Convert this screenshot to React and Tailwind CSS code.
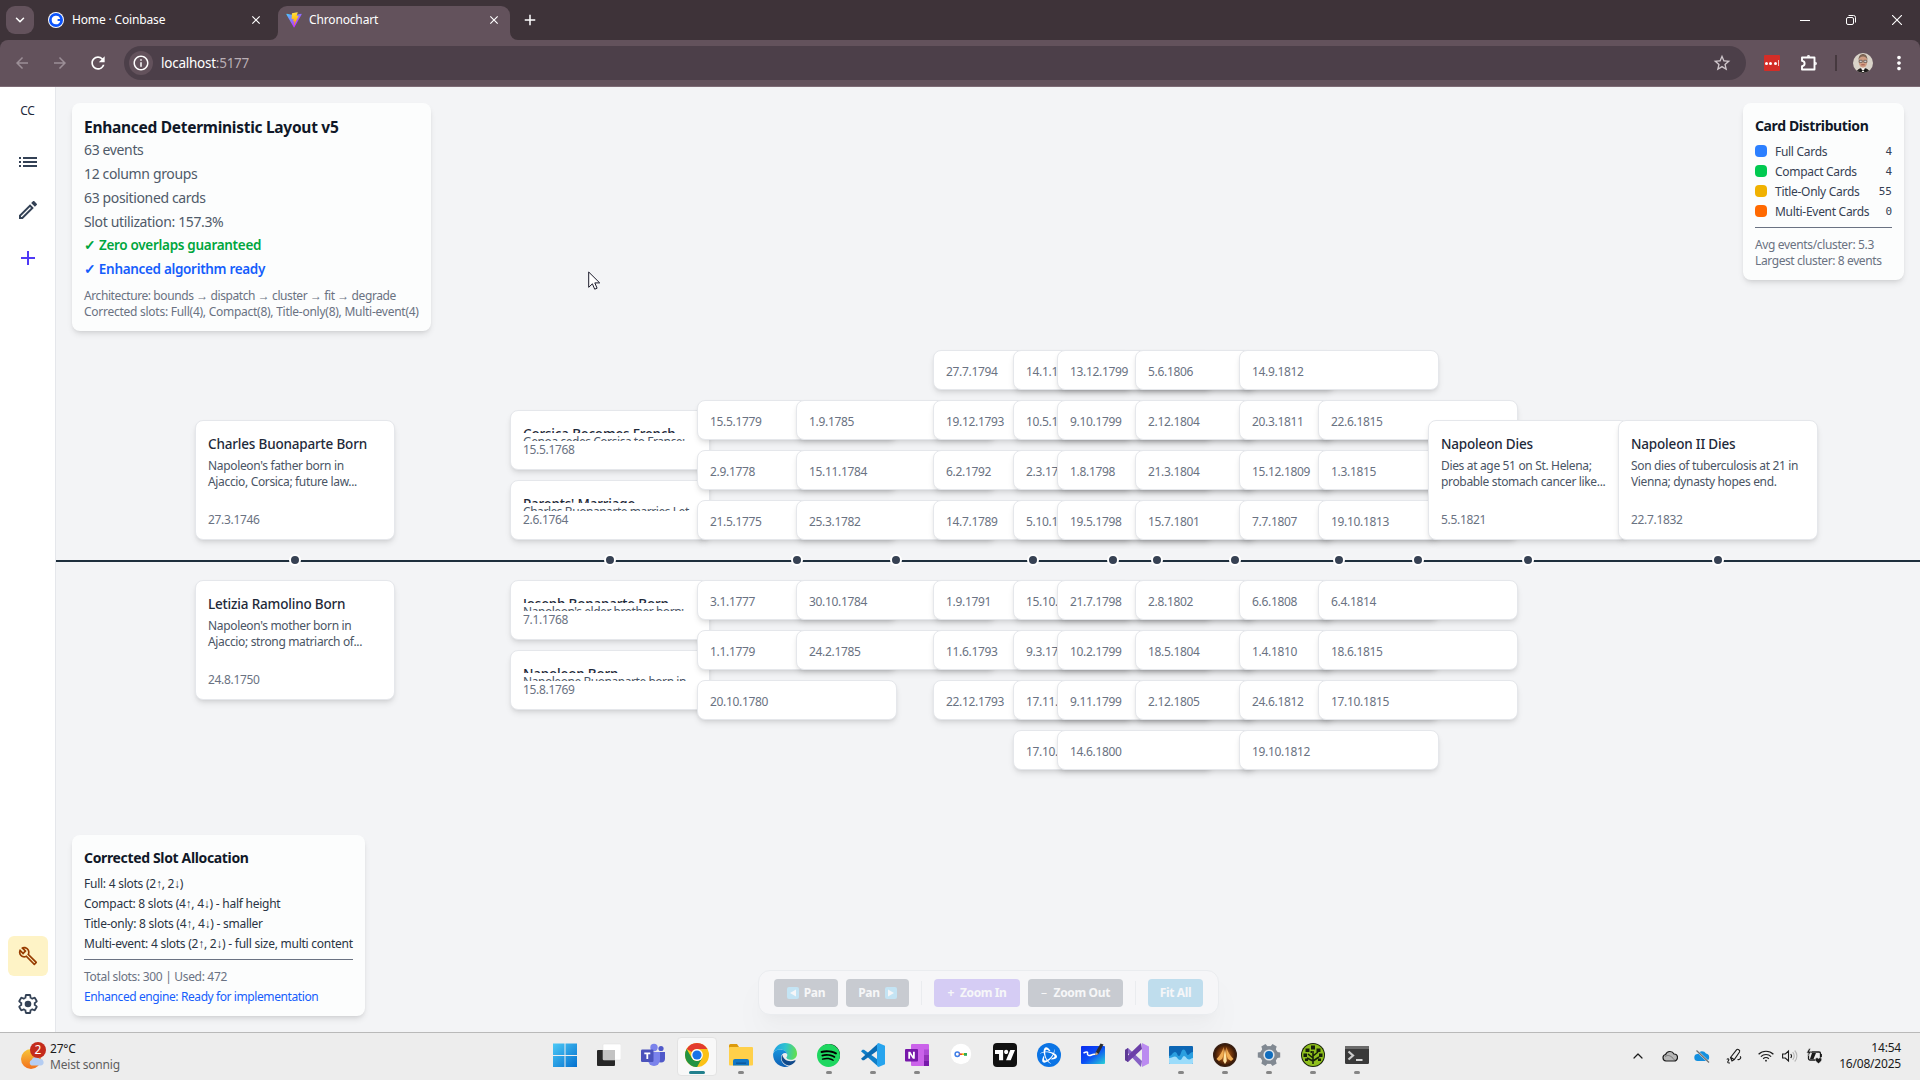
import React from "react";
import {
  MdList,
  MdOutlineEdit,
  MdAdd,
  MdOutlineBuild,
  MdArrowBack,
  MdArrowForward,
  MdRefresh,
  MdInfoOutline,
  MdStarBorder,
  MdMoreVert,
  MdClose,
} from "react-icons/md";
import { SiSpotify, SiTradingview, SiBattledotnet } from "react-icons/si";
import { ChevronDown, ChevronUp } from "lucide-react";

/* ---------- browser chrome ---------- */

function CoinbaseMark() {
  return (
    <svg viewBox="0 0 16 16" className="size-4">
      <circle cx="8" cy="8" r="8" fill="#fff" />
      <circle cx="8" cy="8" r="7" fill="#0b53fb" />
      <path d="M8 12.300a4.300 4.300 0 1 1 4.200-5.200H9.600V8.900h2.600A4.300 4.300 0 0 1 8 12.300z" fill="#fff" />
    </svg>
  );
}

function ViteMark() {
  return (
    <svg viewBox="0 0 410 404" className="size-4">
      <defs>
        <linearGradient id="vite-a" x1="6" y1="33" x2="235" y2="344" gradientUnits="userSpaceOnUse">
          <stop stopColor="#41d1ff" />
          <stop offset="1" stopColor="#bd34fe" />
        </linearGradient>
        <linearGradient id="vite-b" x1="194" y1="9" x2="236" y2="292" gradientUnits="userSpaceOnUse">
          <stop stopColor="#ffea83" />
          <stop offset=".1" stopColor="#ffdd35" />
          <stop offset="1" stopColor="#ffa800" />
        </linearGradient>
      </defs>
      <path
        d="M399.6 59.5 215.6 388.5a10 10 0 0 1-17.4.1L10.6 59.6c-4.2-7.3 2-16.2 10.4-14.7l184.2 32.9c1.2.2 2.4.2 3.5 0L389 44.9c8.3-1.5 14.6 7.3 10.5 14.6z"
        fill="url(#vite-a)"
      />
      <path
        d="M293 1.6 156.700 28.300a5 5 0 0 0-4 4.600l-8.400 141.600a5 5 0 0 0 6.100 5.200l38-8.800a5 5 0 0 1 6 5.900l-11.300 55.200a5 5 0 0 0 6.300 5.800l23.500-7.100a5 5 0 0 1 6.300 5.800l-18 86.800c-1.100 5.400 6.100 8.400 9.100 3.700l2-3.100L323.800 102a5 5 0 0 0-5.400-7.100l-39.200 7.600a5 5 0 0 1-5.700-6.300l25.600-88.700A5 5 0 0 0 293 1.600z"
        fill="url(#vite-b)"
      />
    </svg>
  );
}

function TabStrip() {
  return (
    <div className="flex h-10 items-start bg-[#3e3339] text-white">
      <div className="ml-1.5 mt-1.5 flex size-7 items-center justify-center rounded-[9px] bg-[#63525c]">
        <ChevronDown size={14} strokeWidth={2.6} />
      </div>
      <div className="ml-[14px] flex h-10 w-[215px] items-center">
        <CoinbaseMark />
        <span className="ml-2 text-[12px] tracking-[-0.15px]">Home · Coinbase</span>
        <MdClose size={14} className="ml-auto" />
      </div>
      <div className="ml-[7px] flex h-10 items-end">
        <svg viewBox="0 0 8 8" className="size-2">
          <path d="M8 0v8H0a8 8 0 0 0 8-8z" fill="#63525c" />
        </svg>
        <div className="flex h-[34px] w-[232px] items-center rounded-t-[9px] bg-[#63525c] pb-[6px] pl-2 pr-[9px]">
          <ViteMark />
          <span className="ml-[7px] text-[12px] tracking-[-0.15px]">Chronochart</span>
          <MdClose size={14} className="ml-auto" />
        </div>
        <svg viewBox="0 0 8 8" className="size-2">
          <path d="M0 0v8h8a8 8 0 0 1-8-8z" fill="#63525c" />
        </svg>
      </div>
      <div className="ml-[3px] flex h-10 items-center">
        <MdAdd size={18} />
      </div>
      <div className="ml-auto flex h-10 items-center">
        <div className="flex w-[46px] justify-center">
          <svg viewBox="0 0 10 10" className="size-[10px]">
            <path d="M0 5.500h10" stroke="#fff" />
          </svg>
        </div>
        <div className="flex w-[46px] justify-center">
          <svg viewBox="0 0 10 10" className="size-[10px]" fill="none" stroke="#fff">
            <rect x=".5" y="2.500" width="7" height="7" rx="1.500" />
            <path d="M2.500 .5h5a2 2 0 0 1 2 2v5" />
          </svg>
        </div>
        <div className="flex w-[46px] justify-center">
          <svg viewBox="0 0 10 10" className="size-[10px]">
            <path d="M0 0l10 10M10 0L0 10" stroke="#fff" strokeWidth="1.100" />
          </svg>
        </div>
      </div>
    </div>
  );
}

function Toolbar() {
  return (
    <div className="bg-[#3e3339]">
      <div className="flex h-[47px] items-center rounded-t-lg border-b border-[#7d6b75] bg-[#63525c] text-white">
        <MdArrowBack size={18} className="ml-[13px] text-[#9c8f97]" />
        <MdArrowForward size={18} className="ml-5 text-[#9c8f97]" />
        <MdRefresh size={20} className="ml-[19px]" />
        <div className="ml-4 flex h-[34px] w-[1622px] items-center rounded-full bg-[#4c3f49] pl-[5px] pr-[14px]">
          <div className="flex size-6 items-center justify-center rounded-full bg-[#63525c]">
            <MdInfoOutline size={18} />
          </div>
          <span className="ml-2 text-[13.500px] leading-5 tracking-[-0.25px]">
            localhost<span className="text-[#b9aeb4]">:5177</span>
          </span>
          <MdStarBorder size={20} className="ml-auto text-[#cfc6cb]" />
        </div>
        <div className="ml-[18px] flex size-4 items-center justify-center gap-[1.500px] rounded-[1px] bg-[#d32d27]">
          <i className="size-[3px] rounded-full bg-white" />
          <i className="size-[3px] rounded-full bg-white" />
          <i className="size-[3px] rounded-full bg-white" />
          <i className="h-[6px] w-px bg-white/70" />
        </div>
        <svg viewBox="0 0 20 20" className="ml-[19px] size-5" fill="none" stroke="#fff" strokeWidth="1.900" strokeLinejoin="round">
          <path d="M3 4.500h12.500V16.500H3v-3.200c1.700-.2 2.600-1.300 2.600-2.800S4.700 7.900 3 7.700z" />
          <path d="M7.800 3.800a1.700 1.700 0 0 1 3.400 0zM16.200 8.800a1.700 1.700 0 0 1 0 3.400z" fill="#fff" stroke="none" />
        </svg>
        <div className="ml-4 h-4 w-[2px] bg-[#46393f]" />
        <svg viewBox="0 0 20 20" className="ml-4 size-5">
          <defs>
            <clipPath id="avatar">
              <circle cx="10" cy="10" r="10" />
            </clipPath>
          </defs>
          <g clipPath="url(#avatar)">
            <rect width="20" height="20" fill="#d9d3c9" />
            <path d="M3 20c1-4 4-5 7-5s6 1 7 5z" fill="#23201f" />
            <path d="M8 14h4l-1 5H9z" fill="#f3efe9" />
            <ellipse cx="10" cy="8.500" rx="4.300" ry="6.200" fill="#cf9d83" />
            <path d="M5.500 7c0-4 2-6 4.500-6s4.500 2 4.500 6c-1-2-2-3.500-4.500-3.500S6.500 5 5.500 7z" fill="#7d6656" />
            <path d="M6.200 7.300h3v2h-3zM10.800 7.300h3v2h-3z" fill="#e9e4df" stroke="#4b4441" strokeWidth=".7" />
            <path d="M8.300 11.800h3.400" stroke="#9c4f45" strokeWidth=".9" />
            <path d="M7.300 16 10 17.200l2.700-1.200v2.700L10 17.500l-2.700 1.200z" fill="#111" />
          </g>
        </svg>
        <MdMoreVert size={22} className="ml-[15px]" />
      </div>
    </div>
  );
}

/* ---------- app sidebar ---------- */

function GearOutline() {
  return (
    <svg viewBox="0 0 24 24" className="size-6">
      <path
        transform="translate(1.200 1.200) scale(.9)"
        d="M19.430 12.980c.04-.32.07-.64.07-.98s-.03-.66-.07-.98l2.110-1.650c.19-.15.24-.42.12-.64l-2-3.460a.5.5 0 0 0-.61-.22l-2.490 1c-.52-.4-1.080-.73-1.690-.98l-.38-2.650A.49.49 0 0 0 14 2h-4c-.25 0-.46.18-.49.42l-.38 2.650c-.61.25-1.170.59-1.690.98l-2.490-1a.5.5 0 0 0-.61.22l-2 3.460c-.13.22-.07.49.12.64l2.110 1.650c-.04.32-.07.65-.07.98s.03.66.07.98l-2.110 1.650c-.19.15-.24.42-.12.64l2 3.460c.12.22.39.3.61.22l2.490-1c.52.4 1.080.73 1.690.98l.38 2.650c.03.24.24.42.49.42h4c.25 0 .46-.18.49-.42l.38-2.650c.61-.25 1.170-.59 1.690-.98l2.490 1c.23.09.49 0 .61-.22l2-3.460c.12-.22.07-.49-.12-.64z"
        fill="none"
        stroke="currentColor"
        strokeWidth="2"
      />
      <circle cx="12" cy="12" r="3.300" fill="currentColor" />
    </svg>
  );
}

function Sidebar() {
  return (
    <aside className="flex w-14 shrink-0 flex-col items-center border-r border-gray-200 bg-white pb-2 text-[#334155]">
      <div className="mt-4 text-[12px] leading-4 tracking-[-0.3px] text-[#1e293b]">CC</div>
      <div className="mt-[23px] flex size-10 items-center justify-center">
        <MdList size={24} />
      </div>
      <div className="mt-2 flex size-10 items-center justify-center">
        <MdOutlineEdit size={24} />
      </div>
      <div className="mt-2 flex size-10 items-center justify-center text-[#4f39f6]">
        <MdAdd size={24} />
      </div>
      <div className="mt-auto flex size-10 items-center justify-center rounded-md bg-[#fef3c6] text-[#973c00]">
        <MdOutlineBuild size={20} />
      </div>
      <div className="mt-2 flex size-10 items-center justify-center">
        <GearOutline />
      </div>
    </aside>
  );
}

/* ---------- overlay panels ---------- */

function LayoutPanel() {
  return (
    <section className="absolute left-4 top-4 h-[228px] w-[359px] whitespace-nowrap rounded-lg bg-[#fcfdfd] px-3 pt-3 shadow-md">
      <h1 className="text-[15.500px] font-bold leading-[25px] tracking-[-0.28px] text-[#101828]">
        Enhanced Deterministic Layout v5
      </h1>
      <div className="flex flex-col gap-1 text-[14px] leading-5 tracking-[-0.36px] text-[#4f5a69]">
        <p>63 events</p>
        <p>12 column groups</p>
        <p>63 positioned cards</p>
        <p>Slot utilization: 157.3%</p>
        <p className="text-[13.500px] font-semibold leading-[19px] tracking-[-0.3px] text-[#00a63e]">✓ Zero overlaps guaranteed</p>
        <p className="text-[13.500px] font-semibold tracking-[-0.32px] text-[#155dfc]">✓ Enhanced algorithm ready</p>
      </div>
      <div className="mt-[9px] text-[12px] leading-4 tracking-[-0.26px] text-[#6a7282]">
        <p className="tracking-[-0.41px]">Architecture: bounds → dispatch → cluster → fit → degrade</p>
        <p>Corrected slots: Full(4), Compact(8), Title-only(8), Multi-event(4)</p>
      </div>
    </section>
  );
}

const distribution = [
  { label: "Full Cards", count: 4, swatch: "bg-[#2b7fff]" },
  { label: "Compact Cards", count: 4, swatch: "bg-[#00c950]" },
  { label: "Title-Only Cards", count: 55, swatch: "bg-[#f0b100]" },
  { label: "Multi-Event Cards", count: 0, swatch: "bg-[#ff6900]" },
];

function DistributionPanel() {
  return (
    <section className="absolute right-4 top-4 h-[177px] w-[161px] whitespace-nowrap rounded-lg bg-[#fcfdfd] px-3 pt-3 text-[12px] leading-4 tracking-[-0.29px] shadow-md">
      <h2 className="mb-2 text-[14px] font-bold leading-[21px] tracking-[-0.38px] text-[#101828]">Card Distribution</h2>
      <div className="flex flex-col gap-1 text-[#364153]">
        {distribution.map((d) => (
          <div key={d.label} className="flex h-4 items-center">
            <span className={`mb-[2px] mr-2 size-3 rounded-[4px] ${d.swatch}`} />
            <span>{d.label}</span>
            <span className="mb-px ml-auto font-['DejaVu_Sans_Mono',monospace] text-[11px] tracking-normal text-[#364153]">
              {d.count}
            </span>
          </div>
        ))}
      </div>
      <div className="mt-[7px] border-t border-[#6a7282] pt-[9px] tracking-[-0.4px] text-[#6a7282]">
        <p className="tracking-[-0.35px]">Avg events/cluster: 5.3</p>
        <p>Largest cluster: 8 events</p>
      </div>
    </section>
  );
}

function AllocationPanel() {
  return (
    <section className="absolute bottom-4 left-4 h-[181px] w-[293px] whitespace-nowrap rounded-lg bg-[#fcfdfd] px-3 pt-3 text-[12px] leading-4 tracking-[-0.25px] shadow-md">
      <h2 className="mb-2 text-[14px] font-bold leading-[21px] tracking-[-0.35px] text-[#101828]">
        Corrected Slot Allocation
      </h2>
      <div className="flex flex-col gap-1 text-[#2a3443]">
        <p>Full: 4 slots (2↑, 2↓)</p>
        <p>Compact: 8 slots (4↑, 4↓) - half height</p>
        <p>Title-only: 8 slots (4↑, 4↓) - smaller</p>
        <p>Multi-event: 4 slots (2↑, 2↓) - full size, multi content</p>
      </div>
      <div className="mt-[7px] flex flex-col gap-1 border-t border-[#6a7282] pt-[9px] text-[#6a7282]">
        <p className="tracking-[-0.32px]">Total slots: 300 | Used: 472</p>
        <p className="tracking-[-0.41px] text-[#155dfc]">Enhanced engine: Ready for implementation</p>
      </div>
    </section>
  );
}

/* ---------- timeline ---------- */

/* x is the anchor on the axis, measured from the left edge of the canvas */
const columns = [
  {
    x: 239,
    kind: "full",
    up: [{ title: "Charles Buonaparte Born", lines: ["Napoleon's father born in", "Ajaccio, Corsica; future law..."], date: "27.3.1746" }],
    down: [{ title: "Letizia Ramolino Born", lines: ["Napoleon's mother born in", "Ajaccio; strong matriarch of..."], date: "24.8.1750" }],
  },
  {
    x: 554,
    kind: "compact",
    up: [
      { title: "Corsica Becomes French", lines: ["Genoa cedes Corsica to France;"], date: "15.5.1768" },
      { title: "Parents' Marriage", lines: ["Charles Buonaparte marries Let"], date: "2.6.1764" },
    ],
    down: [
      { title: "Joseph Bonaparte Born", lines: ["Napoleon's elder brother born;"], date: "7.1.1768" },
      { title: "Napoleon Born", lines: ["Napoleone Buonaparte born in"], date: "15.8.1769" },
    ],
  },
  { x: 741, kind: "title", up: ["15.5.1779", "2.9.1778", "21.5.1775"], down: ["3.1.1777", "1.1.1779", "20.10.1780"] },
  { x: 840, kind: "title", up: ["1.9.1785", "15.11.1784", "25.3.1782"], down: ["30.10.1784", "24.2.1785"] },
  { x: 977, kind: "title", up: ["27.7.1794", "19.12.1793", "6.2.1792", "14.7.1789"], down: ["1.9.1791", "11.6.1793", "22.12.1793"] },
  { x: 1057, kind: "title", up: ["14.1.1797", "10.5.1796", "2.3.1796", "5.10.1795"], down: ["15.10.1795", "9.3.1796", "17.11.1796", "17.10.1797"] },
  { x: 1101, kind: "title", up: ["13.12.1799", "9.10.1799", "1.8.1798", "19.5.1798"], down: ["21.7.1798", "10.2.1799", "9.11.1799", "14.6.1800"] },
  { x: 1179, kind: "title", up: ["5.6.1806", "2.12.1804", "21.3.1804", "15.7.1801"], down: ["2.8.1802", "18.5.1804", "2.12.1805"] },
  { x: 1283, kind: "title", up: ["14.9.1812", "20.3.1811", "15.12.1809", "7.7.1807"], down: ["6.6.1808", "1.4.1810", "24.6.1812", "19.10.1812"] },
  { x: 1362, kind: "title", up: ["22.6.1815", "1.3.1815", "19.10.1813"], down: ["6.4.1814", "18.6.1815", "17.10.1815"] },
  {
    x: 1472,
    kind: "full",
    up: [{ title: "Napoleon Dies", lines: ["Dies at age 51 on St. Helena;", "probable stomach cancer like..."], date: "5.5.1821" }],
    down: [],
  },
  {
    x: 1662,
    kind: "full",
    up: [{ title: "Napoleon II Dies", lines: ["Son dies of tuberculosis at 21 in", "Vienna; dynasty hopes end."], date: "22.7.1832" }],
    down: [],
  },
];

const shell =
  "flex w-full shrink-0 flex-col whitespace-nowrap rounded-lg border border-gray-200 bg-white px-3 pt-3 text-[12px] tracking-[-0.32px] text-[#6a7282] shadow-md";

function Card({ kind, item }) {
  if (kind === "full") {
    return (
      <div className={`${shell} h-[120px] pb-[11px] leading-4`}>
        <h3 className="text-[13.500px] font-medium leading-[22px] tracking-[-0.18px] text-[#1e2939]">{item.title}</h3>
        <div className="mt-[3px] tracking-[-0.34px] text-[#4a5565]">
          {item.lines.map((l) => (
            <p key={l}>{l}</p>
          ))}
        </div>
        <p className="mt-auto">{item.date}</p>
      </div>
    );
  }
  if (kind === "compact") {
    return (
      <div className={`${shell} h-[60px] leading-[18px]`}>
        <h3 className="h-[10px] shrink-0 overflow-hidden text-[13.500px] font-medium leading-[22px] tracking-[-0.18px] text-[#1e2939]">
          {item.title}
        </h3>
        <p className="h-2 shrink-0 overflow-hidden tracking-[-0.45px] text-[#4a5565]">{item.lines[0]}</p>
        <p>{item.date}</p>
      </div>
    );
  }
  return <div className={`${shell} h-10 leading-[18px]`}>{item}</div>;
}

function Timeline() {
  return (
    <>
      <div className="absolute inset-x-0 top-[473px] h-[2px] bg-[#1e2f3d]" />
      {columns.map((c) => (
        <div key={c.x} className="absolute inset-y-0 w-[200px]" style={{ left: c.x - 100 }}>
          <div className="flex h-[453px] flex-col justify-end gap-[10px]">
            {c.up.map((it, i) => (
              <Card key={i} kind={c.kind} item={it} />
            ))}
          </div>
          <div className="flex h-10 items-center justify-center">
            <span className="size-3 rounded-full border-2 border-white bg-[#364153]" />
          </div>
          <div className="flex flex-col gap-[10px]">
            {c.down.map((it, i) => (
              <Card key={i} kind={c.kind} item={it} />
            ))}
          </div>
        </div>
      ))}
    </>
  );
}

function Controls() {
  const btn = "flex h-7 items-center justify-center rounded-[4px] pt-px text-[12px] font-bold text-white";
  return (
    <div className="absolute bottom-[17px] left-[702px] flex h-[45px] w-[461px] items-center gap-2 whitespace-nowrap rounded-xl border border-gray-300 bg-white px-[15px] opacity-25 shadow-xl">
      <button className={`${btn} w-16 gap-[5px] bg-[#4a5565] tracking-[-0.3px]`}>
        <span className="flex size-3 items-center justify-center rounded-[2px] bg-[#3bb8f0]">
          <svg viewBox="0 0 8 8" className="size-2">
            <path d="M7 0.500v7L1 4z" fill="#fff" />
          </svg>
        </span>
        Pan
      </button>
      <button className={`${btn} w-[63px] gap-[5px] bg-[#4a5565] tracking-[-0.3px]`}>
        Pan
        <span className="flex size-3 items-center justify-center rounded-[2px] bg-[#3bb8f0]">
          <svg viewBox="0 0 8 8" className="size-2">
            <path d="M1 0.500v7L7 4z" fill="#fff" />
          </svg>
        </span>
      </button>
      <span className="mx-1 h-6 w-px bg-gray-300" />
      <button className={`${btn} w-[86px] gap-[6px] bg-[#7f5af0] tracking-[-0.4px]`}>
        <span>+</span>Zoom In
      </button>
      <button className={`${btn} w-[95px] gap-[7px] bg-[#4a5565] tracking-[-0.35px]`}>
        <span className="font-normal">–</span>Zoom Out
      </button>
      <span className="mx-1 h-6 w-px bg-gray-300" />
      <button className={`${btn} w-[55px] bg-[#2a9bd6] tracking-[-0.35px]`}>Fit All</button>
    </div>
  );
}

function Cursor() {
  return (
    <svg viewBox="0 0 13 20" className="absolute left-[532px] top-[184px] h-5 w-[13px]">
      <path d="M.7 1v15.300l3.700-3.500 2.300 5.400 2.400-1-2.300-5.300h4.900z" fill="#fff" stroke="#1b1b2b" strokeWidth="1" />
    </svg>
  );
}

/* ---------- taskbar ---------- */

const icon = "size-6";

function WindowsIcon() {
  return (
    <svg viewBox="0 0 24 24" className={icon}>
      <defs>
        <linearGradient id="win" x1="0" y1="0" x2="1" y2="1">
          <stop stopColor="#4cc9f6" />
          <stop offset="1" stopColor="#0470cf" />
        </linearGradient>
      </defs>
      <path d="M0 .5h11.500V12H0zM12.500.5H24V12H12.500zM0 13h11.500v11H0zM12.500 13H24v11H12.500z" fill="url(#win)" />
    </svg>
  );
}
function TaskViewIcon() {
  return (
    <svg viewBox="0 0 24 24" className={icon}>
      <rect x="0" y="7" width="18" height="16" rx="1" fill="#272727" />
      <rect x="6" y="1" width="18" height="16" rx="1" fill="#fff" stroke="#dcdcdc" strokeWidth=".5" />
      <path d="M6 7h12v10H6z" fill="#c3c3c3" />
    </svg>
  );
}
function TeamsIcon() {
  return (
    <svg viewBox="0 0 24 24" className={icon}>
      <circle cx="20" cy="5.500" r="2.600" fill="#5059c9" />
      <path d="M16 9h8v6.500a4 4 0 0 1-8 0z" fill="#5059c9" />
      <circle cx="13" cy="4.500" r="3.700" fill="#7b83eb" />
      <path d="M7 9h12v8a6 6 0 0 1-12 0z" fill="#7b83eb" />
      <rect x="0" y="6.500" width="12.500" height="12.500" rx="1.200" fill="#4b53bc" />
      <path d="M3.300 9.500h6v1.700H7.200V16H5.400v-4.800H3.300z" fill="#fff" />
    </svg>
  );
}
function ChromeIcon() {
  return (
    <svg viewBox="0 0 24 24" className={icon}>
      <circle cx="12" cy="12" r="12" fill="#fbc116" />
      <path d="M12 0a12 12 0 0 1 10.390 6H12a6 6 0 0 0-5.200 3L1.610 6A12 12 0 0 1 12 0z" fill="#e33b2e" />
      <path d="M1.610 6 6.800 15A6 6 0 0 0 12 18h1.500L12 24A12 12 0 0 1 1.610 6z" fill="#229342" />
      <path d="M17.200 15 12 24l-2-.2L13.500 17.800z" fill="#229342" />
      <circle cx="12" cy="12" r="5.900" fill="#fff" />
      <circle cx="12" cy="12" r="4.600" fill="#1a73e8" />
    </svg>
  );
}
function ExplorerIcon() {
  return (
    <svg viewBox="0 0 24 24" className={icon}>
      <path d="M0 2.500A1.500 1.500 0 0 1 1.500 1H8l2 3v5H0z" fill="#dc9a0c" />
      <rect x="0" y="4" width="24" height="18.500" rx="1" fill="#ffd04a" />
      <path d="M4 22.500V18a2 2 0 0 1 2-2h12a2 2 0 0 1 2 2v4.500z" fill="#0f76c6" />
      <path d="M7 19.500h10v1.300H7z" fill="#0a5396" />
    </svg>
  );
}
function EdgeIcon() {
  return (
    <svg viewBox="0 0 24 24" className={icon}>
      <defs>
        <linearGradient id="edge-a" x1="0" y1=".3" x2="1" y2=".4">
          <stop stopColor="#1f9fe4" />
          <stop offset=".5" stopColor="#2fc3cf" />
          <stop offset="1" stopColor="#62df4c" />
        </linearGradient>
        <linearGradient id="edge-b" x1="0" y1="0" x2="0" y2="1">
          <stop stopColor="#1593dd" />
          <stop offset="1" stopColor="#0f5fb4" />
        </linearGradient>
      </defs>
      <path d="M.3 10C1.500 4 6.300 0 12 0c7 0 12 5 12 10.500 0 4-3 6.300-6.200 6.300-3 0-4.400-1.300-4.400-2.200 0-.6.900-.9.900-2.500 0-3-3-5.500-7-5.500C3.500 6.600 1 8.500.3 10z" fill="url(#edge-a)" />
      <path d="M.2 10.500C1.300 8 4 6.600 7.300 6.600c3.500 0 6.200 1.900 6.900 4.300C12.500 9 8 10 8 15c0 4.500 4 8 8 8.300A12 12 0 0 1 .2 10.500z" fill="url(#edge-b)" />
      <path d="M9.300 11.800C6.800 16.500 10.500 22 16 22.400c2.500-.3 5-2 6.500-4.500.3-.5-.2-.8-.6-.6-4 2-9 .6-11-2-.9-1.200-1.500-2.300-1.600-3.500z" fill="#114a8b" />
    </svg>
  );
}
function VsCodeIcon() {
  return (
    <svg viewBox="0 0 24 24" className={icon}>
      <path d="M1.500 6.800 0 8.300 16.500 23l1.500-5.500L3 6.800z" fill="#0f7fc9" />
      <path d="M1.500 17.200 0 15.700 16.500 1 18 6.500 3 17.200z" fill="#0a6bb3" />
      <path d="M17.500 0 24 2.700v18.600L17.500 24l-1.500-1V1z" fill="#27a4ee" />
    </svg>
  );
}
function OneNoteIcon() {
  return (
    <svg viewBox="0 0 24 24" className={icon}>
      <rect x="6" y="1" width="18" height="22" rx="1" fill="#cb63ea" />
      <path d="M19 6.500h5V12h-5z" fill="#ae4bd5" />
      <path d="M19 12h5v5.500h-5z" fill="#9333b8" />
      <path d="M19 17.500h5V23h-5z" fill="#7719aa" />
      <rect x="0" y="6" width="13" height="12.500" rx="1" fill="#7719aa" />
      <path d="M3.300 15.800V8.700h2l2.700 4.400V8.700h1.800v7.100H7.900L5.100 11.400v4.400z" fill="#fff" />
    </svg>
  );
}
function PasskeyIcon() {
  return (
    <svg viewBox="0 0 24 24" className={icon}>
      <circle cx="12" cy="11" r="10.200" fill="#fff" />
      <circle cx="8.300" cy="11.200" r="2.200" fill="none" stroke="#3f7fe8" strokeWidth="1.500" />
      <path d="M10.500 10.400h3v1.600h-3z" fill="#ea4335" />
      <path d="M13 10.400h2.500v1.600H13z" fill="#fbbc04" />
      <path d="M15 10h3v2.800h-3z" fill="#34a853" />
    </svg>
  );
}
function TradingIcon() {
  return (
    <span className="flex size-6 items-center justify-center rounded-[4px] bg-[#101010] text-white">
      <SiTradingview size={20} />
    </span>
  );
}
function BattleIcon() {
  return (
    <span className="flex size-6 items-center justify-center rounded-full bg-[#0b74e5] text-white">
      <SiBattledotnet size={17} />
    </span>
  );
}
function WhiteboardIcon() {
  return (
    <svg viewBox="0 0 24 24" className={icon}>
      <defs>
        <linearGradient id="wb" x1="0" y1="0" x2="1" y2="1">
          <stop stopColor="#0a2cf0" />
          <stop offset=".5" stopColor="#0b4df5" />
          <stop offset="1" stopColor="#2bd3d6" />
        </linearGradient>
      </defs>
      <rect x="0" y="3" width="24" height="18" rx="1" fill="url(#wb)" />
      <path d="M2.500 10c3-1.500 4.500-1.500 4 .5s2 2.500 4 1.500 3-.5 4.500-1" fill="none" stroke="#fff" strokeWidth="1.500" />
      <path d="M19.500.5 22.500 1.500 17.500 11l-3 1.500.3-3.500z" fill="#2d2d31" />
      <path d="m14.800 9 2.700 2-3 1.500z" fill="#c9a27c" />
    </svg>
  );
}
function VisualStudioIcon() {
  return (
    <svg viewBox="0 0 24 24" className={icon}>
      <path d="M0 7 3 5l14 13-1 6z" fill="#8661c5" />
      <path d="M0 7v10l3 2 14-13-1-6L3 12.500 3 8z" fill="#6b3fa8" />
      <path d="M0 7v10l3 2V5z" fill="#5d3a94" />
      <path d="M17 0 24 3.500v17L17 24z" fill="#bb8bf0" />
    </svg>
  );
}
function MonitorIcon() {
  return (
    <svg viewBox="0 0 24 24" className={icon}>
      <rect x="0" y="3" width="24" height="18" rx="1" fill="#0c66b4" />
      <path d="M0 13c3 0 3.500-4 6-4s2 4 4 4 2-6.500 4.500-6.500S17.500 12 19 12s2-3 5-3v11H0z" fill="#2a9fe0" />
      <path d="M0 15c3 0 4-1.500 6-1.500S9 17 11 17s2.500-4 4-4 3 3.500 5 3.500 2-1.500 4-1.500v5a1 1 0 0 1-1 1H1a1 1 0 0 1-1-1z" fill="#9bdcfb" />
    </svg>
  );
}
function GameIcon() {
  return (
    <svg viewBox="0 0 24 24" className={icon}>
      <defs>
        <radialGradient id="game">
          <stop stopColor="#f4a740" />
          <stop offset=".55" stopColor="#7a3a0d" />
          <stop offset="1" stopColor="#2a1206" />
        </radialGradient>
      </defs>
      <circle cx="12" cy="12" r="11.300" fill="url(#game)" stroke="#3a2114" strokeWidth="1.400" />
      <path d="M10.500 4C9.500 9 7 12 3.500 16l2.500 2 3-2c1.500-3 2-8 1.500-12zM13.500 4c1 5 3.500 8 7 12l-2.500 2-3-2c-1.500-3-2-8-1.500-12z" fill="#f0ad55" />
      <path d="M12 6l1.800 12-1.800 3-1.800-3z" fill="#ffe3a3" />
    </svg>
  );
}
function GearIcon() {
  const teeth = [0, 60, 120, 180, 240, 300];
  return (
    <svg viewBox="0 0 24 24" className={icon}>
      {teeth.map((a) => (
        <path key={a} d="M8.700 5 9.600.8h4.800L15.300 5z" fill="#818992" transform={`rotate(${a + 30} 12 12)`} />
      ))}
      <circle cx="12" cy="12" r="9" fill="#818992" />
      <circle cx="12" cy="12" r="5.600" fill="#dfe5ea" />
      <circle cx="12" cy="12" r="4" fill="#0f6cbd" />
    </svg>
  );
}
function TreeIcon() {
  return (
    <svg viewBox="0 0 24 24" className={icon}>
      <circle cx="12" cy="12" r="12" fill="#16210a" />
      <circle cx="12" cy="12" r="11" fill="#8fbf1c" />
      <path d="M12 21V8M12 15l-5-4M12 13l5-4M12 18l6-4M12 18l-6-3" stroke="#16210a" strokeWidth="1.600" fill="none" />
      <path d="M10 2.500h4v4h-4zM4.500 5.500h4v3.500h-4zM15.500 5.500h4V9h-4zM2.500 10.500H6V14H2.500zM18 10.500h3.500V14H18zM9.500 8H11v2H9.500zM4 15.500h3V18H4zM17 15.500h3V18h-3z" fill="#16210a" />
    </svg>
  );
}
function TerminalIcon() {
  return (
    <svg viewBox="0 0 24 24" className={icon}>
      <rect x="0" y="3" width="24" height="18" rx="1.200" fill="#3a3a3a" />
      <path d="M0 4.200A1.200 1.200 0 0 1 1.200 3h21.600A1.200 1.200 0 0 1 24 4.200V6H0z" fill="#6b6b6b" />
      <path d="m3.500 8.500 4.500 4-4.500 4" fill="none" stroke="#ccc" strokeWidth="2.200" />
      <path d="M11 17h6.500" stroke="#fff" strokeWidth="1.600" />
    </svg>
  );
}
function SpotifyIcon() {
  return (
    <span className="flex size-6 items-center justify-center">
      <span className="flex size-[22px] items-center justify-center rounded-full bg-black">
        <SiSpotify size={23} className="shrink-0 text-[#1ed760]" />
      </span>
    </span>
  );
}

const apps = [
  { Icon: WindowsIcon },
  { Icon: TaskViewIcon },
  { Icon: TeamsIcon },
  { Icon: ChromeIcon, active: true },
  { Icon: ExplorerIcon, open: true },
  { Icon: EdgeIcon },
  { Icon: SpotifyIcon, open: true },
  { Icon: VsCodeIcon, open: true },
  { Icon: OneNoteIcon, open: true },
  { Icon: PasskeyIcon },
  { Icon: TradingIcon },
  { Icon: BattleIcon },
  { Icon: WhiteboardIcon },
  { Icon: VisualStudioIcon },
  { Icon: MonitorIcon, open: true },
  { Icon: GameIcon, open: true },
  { Icon: GearIcon, open: true },
  { Icon: TreeIcon, open: true },
  { Icon: TerminalIcon, open: true },
];

function Weather() {
  return (
    <div className="flex items-center pb-[2px] pl-5">
      <svg viewBox="0 0 26 28" className="h-7 w-[26px]">
        <defs>
          <linearGradient id="sun" x1="0" y1="0" x2="0" y2="1">
            <stop stopColor="#f8c63a" />
            <stop offset="1" stopColor="#f2701d" />
          </linearGradient>
        </defs>
        <circle cx="11" cy="17" r="10" fill="url(#sun)" />
        <path d="M11.500 23.500a3 3 0 0 1 0-5.500 4.500 4.500 0 0 1 8-1 3.200 3.200 0 0 1 1.500 6.500z" fill="#b5cdf2" />
        <circle cx="18" cy="8" r="8" fill="#c42b1c" />
        <text x="18" y="12.200" textAnchor="middle" fontSize="12" fill="#fff">
          2
        </text>
      </svg>
      <div className="ml-1 mt-[2px] text-[12px] leading-4 tracking-[-0.2px] text-[#1b1b1b]">
        <p>27°C</p>
        <p className="text-[#5f5f5f]">Meist sonnig</p>
      </div>
    </div>
  );
}

function Tray() {
  return (
    <div className="flex items-center justify-end pb-px pr-[19px] text-[#1b1b1b]">
      <ChevronUp size={16} strokeWidth={1.800} />
      <svg viewBox="0 0 16 12" className="ml-4 h-3 w-4">
        <path d="M4 11a3.300 3.300 0 0 1-.4-6.500A4.600 4.600 0 0 1 12 4a3.500 3.500 0 0 1 0 7z" fill="#b6b6b6" stroke="#1b1b1b" strokeWidth="1.200" />
        <path d="M3 6.500c3-2 6-1 9.500 3.500" stroke="#777" strokeWidth="1" fill="none" />
      </svg>
      <svg viewBox="0 0 16 14" className="ml-4 h-[14px] w-4">
        <path d="M4 12a3.500 3.500 0 0 1-.4-7A4.800 4.800 0 0 1 12 4.500 3.800 3.800 0 0 1 12 12z" fill="#1490df" />
        <path d="M2.500 1.500 15 13.500" stroke="#ededed" strokeWidth="2" />
        <path d="M2.500 1.500 15 13.500" stroke="#6f6f6f" strokeWidth="1.200" />
      </svg>
      <svg viewBox="0 0 16 16" className="ml-4 size-4" fill="none" stroke="#1b1b1b" strokeWidth="1.100">
        <path d="M6 13 4.500 9.500 10.500 1.800c1-1.300 4 .2 3 2.200L8.300 11.500 6 13zM5 9.500l3 2M.8 11.500C2 10 3.500 11 2.500 12.500S1 15.200 4 15M14 8.500c2 1-.5 3.500-2.500 3" />
      </svg>
      <svg viewBox="0 0 16 12" className="ml-4 h-3 w-4" fill="none" stroke="#1b1b1b" strokeWidth="1.200">
        <path d="M.6 4.300a10.500 10.500 0 0 1 14.800 0M2.900 6.600a7.300 7.300 0 0 1 10.200 0M5.200 8.800a4 4 0 0 1 5.600 0" />
        <circle cx="8" cy="10.700" r=".9" fill="#1b1b1b" stroke="none" />
      </svg>
      <svg viewBox="0 0 16 14" className="ml-2 h-[14px] w-4" fill="none" stroke="#1b1b1b" strokeWidth="1.100">
        <path d="M.6 5h2.700L6.500 2v10L3.300 9H.6zM8.700 5a3 3 0 0 1 0 4" />
        <path d="M10.700 3.200a5.500 5.500 0 0 1 0 7.600M12.700 1.500a8 8 0 0 1 0 11" stroke="#b5b5b5" />
      </svg>
      <svg viewBox="0 0 16 16" className="ml-2 size-4">
        <rect x="2.500" y="4" width="12" height="8" rx="1.500" fill="none" stroke="#1b1b1b" strokeWidth="1.300" />
        <path d="M6 5h4L7.500 11H4z" fill="#1b1b1b" />
        <path d="M15.300 6v3" stroke="#1b1b1b" strokeWidth="1.200" />
        <path d="M3 .5.5 5h2L1.500 8.500 5.500 3.500h-2L4.500.5z" stroke="#ededed" strokeWidth=".5" fill="#1b1b1b" />
        <path d="M12.500 15.500c-2-1.500-3.200-2.500-3.200-4a1.700 1.700 0 0 1 3.200-.8 1.700 1.700 0 0 1 3.200.8c0 1.500-1.200 2.500-3.200 4z" fill="#1b1b1b" stroke="#ededed" strokeWidth=".5" />
      </svg>
      <div className="ml-[17px] w-[62px] text-right text-[12px] leading-4 tracking-[-0.2px]">
        <p>14:54</p>
        <p>16/08/2025</p>
      </div>
    </div>
  );
}

function Taskbar() {
  return (
    <footer className="grid h-12 shrink-0 grid-cols-[1fr_auto_1fr] border-t border-[#b9b9b9] bg-[#ededed]">
      <Weather />
      <div className="flex items-center pl-px">
        {apps.map(({ Icon, open, active }, i) => (
          <div key={i} className="flex h-[47px] w-11 flex-col items-center">
            <div
              className={
                active
                  ? "mt-1 flex h-[39px] w-10 flex-col items-center rounded-[4px] border border-[#e3e3e3] bg-[#f8f8f8] pt-[5px]"
                  : "mt-1 flex h-[39px] w-10 flex-col items-center pt-[6px]"
              }
            >
              <Icon />
              {active && <i className="mt-1 h-[3px] w-4 rounded-full bg-[#21808d]" />}
              {open && <i className="mt-1 h-[3px] w-[6px] rounded-full bg-[#868686]" />}
            </div>
          </div>
        ))}
      </div>
      <Tray />
    </footer>
  );
}

export default function App() {
  return (
    <div className="flex h-[1080px] w-[1920px] flex-col overflow-hidden bg-[#f3f4f6] font-['Noto_Sans',sans-serif]">
      <TabStrip />
      <Toolbar />
      <div className="flex h-[945px] shrink-0">
        <Sidebar />
        <main className="relative flex-1 overflow-hidden bg-[#f3f4f6]">
          <Timeline />
          <LayoutPanel />
          <DistributionPanel />
          <AllocationPanel />
          <Controls />
          <Cursor />
        </main>
      </div>
      <Taskbar />
    </div>
  );
}
